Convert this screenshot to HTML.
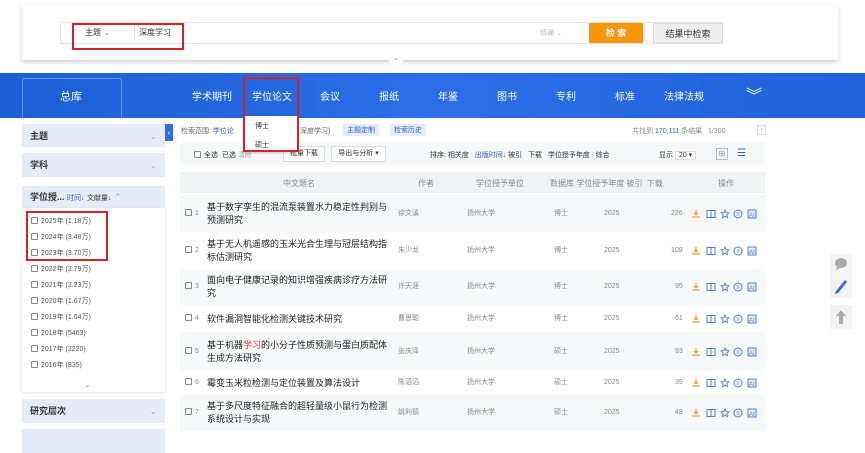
<!DOCTYPE html>
<html><head><meta charset="utf-8"><style>
*{margin:0;padding:0;box-sizing:border-box}
body{width:865px;height:439px;overflow:hidden;background:#fff;font-family:"Liberation Sans","Noto Sans CJK SC",sans-serif;position:relative;color:#333}
.a{position:absolute;white-space:nowrap}
.nav{color:#fff;font-size:10px}
.side{background:#e6ecf7;font-size:9px;font-weight:bold;color:#333;padding-left:8px;line-height:24px}
.yr{font-size:7px;color:#555}
.cb{display:inline-block;width:7px;height:7px;border:1px solid #888;border-radius:1px;vertical-align:-1px;margin-right:3px}
.row{position:absolute;left:180px;width:585px;font-size:9px}
.s{position:absolute;font-size:7px;color:#888;line-height:10px}
</style></head><body>
<!-- search panel -->
<div class="a" style="left:22px;top:5px;width:816px;height:55px;background:#fff;box-shadow:0 2px 4px rgba(0,0,0,.2)"></div>
<div class="a" style="left:60px;top:22px;width:663px;height:22px;border:1px solid #e5e5e5;background:#fff"></div>
<div class="a" style="left:72px;top:23px;width:112px;height:27px;border:2px solid #d2232a"></div>
<div class="a" style="left:85px;top:27px;font-size:8px">主题 <span style="color:#999">⌄</span></div>
<div class="a" style="left:134px;top:26px;width:1px;height:14px;background:#ddd"></div>
<div class="a" style="left:139px;top:27px;font-size:8px">深度学习</div>
<div class="a" style="left:540px;top:28px;font-size:7px;color:#bbb">精确 ⌄</div>
<div class="a" style="left:589px;top:23px;width:54px;height:20px;background:#f7950b;color:#fff;font-size:9px;font-weight:bold;text-align:center;line-height:20px">检 索</div>
<div class="a" style="left:653px;top:23px;width:70px;height:20px;background:#eee;font-size:9px;text-align:center;line-height:20px;border:1px solid #ddd">结果中检索</div>
<div class="a" style="left:389px;top:54px;width:14px;height:12px;background:#fff;border-radius:6px;font-size:7px;color:#999;text-align:center">⌄</div>
<!-- nav -->
<div class="a" style="left:0;top:73px;width:865px;height:45px;background:linear-gradient(90deg,#1b5fd6,#2a6fe8 50%,#1e62dc)"></div>
<div class="a" style="left:22px;top:78px;width:100px;height:40px;border:1px solid rgba(255,255,255,.35);border-bottom:none;border-radius:3px 3px 0 0"></div>
<div class="a nav" style="left:60px;top:88px;font-size:11px">总库</div>
<div class="a nav" style="left:192px;top:88px">学术期刊</div>
<div class="a nav" style="left:252px;top:88px">学位论文</div>
<div class="a nav" style="left:320px;top:88px">会议</div>
<div class="a nav" style="left:379px;top:88px">报纸</div>
<div class="a nav" style="left:438px;top:88px">年鉴</div>
<div class="a nav" style="left:497px;top:88px">图书</div>
<div class="a nav" style="left:556px;top:88px">专利</div>
<div class="a nav" style="left:615px;top:88px">标准</div>
<div class="a nav" style="left:664px;top:88px">法律法规</div>
<div class="a nav" style="left:746px;top:82px;font-size:16px">︾</div>
<!-- sidebar -->
<div class="a side" style="left:22px;top:124px;width:143px;height:23px">主题<span style="float:right;margin-right:8px;color:#aaa;font-weight:normal">⌄</span></div>
<div class="a side" style="left:22px;top:153px;width:143px;height:24px">学科<span style="float:right;margin-right:8px;color:#aaa;font-weight:normal">⌄</span></div>
<div class="a side" style="left:22px;top:186px;width:143px;height:22px;line-height:22px">学位授... <span style="color:#2a62d0;font-size:7px;font-weight:normal">时间↓</span> <span style="font-size:7px;font-weight:normal">文献量↓</span> <span style="color:#999;font-weight:normal">⌃</span></div>
<div class="a" style="left:22px;top:208px;width:143px;height:184px;background:#fff;box-shadow:0 1px 3px rgba(0,0,0,.12)"></div>
<div class="a yr" style="left:31px;top:214px;line-height:16px">
<div><span class="cb"></span>2025年 (1.18万)</div><div><span class="cb"></span>2024年 (3.48万)</div><div><span class="cb"></span>2023年 (3.70万)</div><div><span class="cb"></span>2022年 (2.79万)</div><div><span class="cb"></span>2021年 (2.23万)</div><div><span class="cb"></span>2020年 (1.67万)</div><div><span class="cb"></span>2019年 (1.04万)</div><div><span class="cb"></span>2018年 (5463)</div><div><span class="cb"></span>2017年 (2220)</div><div><span class="cb"></span>2016年 (835)</div></div>
<div class="a" style="left:26px;top:211px;width:82px;height:50px;border:2px solid #d2232a"></div>
<div class="a" style="left:84px;top:380px;font-size:8px;color:#7b9fe0">⌄</div>
<div class="a side" style="left:22px;top:399px;width:143px;height:24px">研究层次<span style="float:right;margin-right:8px;color:#aaa;font-weight:normal">⌄</span></div>
<div class="a side" style="left:22px;top:429px;width:143px;height:24px"></div>
<div class="a" style="left:165px;top:124px;width:8px;height:17px;background:#2a6fe8;color:#fff;font-size:8px;text-align:center;line-height:17px">‹</div>
<!-- top bar -->
<div class="a" style="left:181px;top:126px;font-size:7px;color:#666">检索范围: <span style="color:#2a62d0">学位论</span></div>
<div class="a" style="left:300px;top:126px;font-size:7px;color:#666">深度学习)</div>
<div class="a" style="left:343px;top:124px;padding:1px 4px;background:#e5edfb;font-size:7px;color:#2a62d0">主题定制</div>
<div class="a" style="left:390px;top:124px;padding:1px 4px;background:#e5edfb;font-size:7px;color:#2a62d0">检索历史</div>
<div class="a" style="left:632px;top:126px;font-size:7px;color:#888">共找到 <span style="color:#2a62d0">170,111</span> 条结果 &nbsp; 1/300</div>
<div class="a" style="left:757px;top:125px;width:9px;height:10px;border:1px solid #ddd;font-size:7px;color:#999;text-align:center;line-height:8px">›</div>
<!-- toolbar -->
<div class="a" style="left:180px;top:143px;width:585px;height:22px;background:#f6f7f9"></div>
<div class="a" style="left:194px;top:150px;font-size:7px"><span class="cb"></span>全选 &nbsp;已选 <span style="color:#aaa">清除</span></div>
<div class="a" style="left:283px;top:146px;width:42px;height:16px;background:#fff;border:1px solid #ddd;font-size:7px;text-align:center;line-height:14px">批量下载</div>
<div class="a" style="left:331px;top:146px;width:55px;height:16px;background:#fff;border:1px solid #ddd;font-size:7px;text-align:center;line-height:14px">导出与分析 ▾</div>
<div class="a" style="left:430px;top:150px;font-size:7px">排序: 相关度 &nbsp; <span style="color:#2a62d0">出版时间↓</span> 被引 &nbsp; 下载 &nbsp; 学位授予年度 &nbsp; 综合</div>
<div class="a" style="left:659px;top:150px;font-size:7px">显示 <span style="border:1px solid #ddd;background:#fff;padding:0 3px">20 ▾</span></div>
<div class="a" style="left:716px;top:148px;width:12px;height:12px;border:1px solid #bbb;font-size:8px;color:#999;line-height:10px;text-align:center">⊞</div>
<div class="a" style="left:737px;top:148px;font-size:10px;color:#2a62d0;line-height:12px">☰</div>
<!-- header -->
<div class="a" style="left:180px;top:172px;width:585px;height:21px;background:#f1f2f4"></div>
<div class="a" style="left:283px;top:178px;font-size:8px;color:#888">中文题名</div>
<div class="a" style="left:418px;top:178px;font-size:8px;color:#888">作者</div>
<div class="a" style="left:476px;top:178px;font-size:8px;color:#888">学位授予单位</div>
<div class="a" style="left:550px;top:178px;font-size:8px;color:#888">数据库 学位授予年度 被引 &nbsp;下载</div>
<div class="a" style="left:718px;top:178px;font-size:8px;color:#888">操作</div>
<div id="rows"></div>
<!-- dropdown (on top) -->
<div class="a" style="left:244px;top:116px;width:54px;height:36px;background:#fff;box-shadow:0 1px 3px rgba(0,0,0,.2);z-index:5"></div>
<div class="a" style="left:255px;top:121px;font-size:7px;z-index:6">博士</div>
<div class="a" style="left:255px;top:140px;font-size:7px;z-index:6">硕士</div>
<div class="a" style="left:243px;top:77px;width:56px;height:75px;border:2px solid #d2232a;z-index:7"></div>
<script>
var R=[[195,37,"基于数字孪生的混流泵装置水力稳定性判别与预测研究","徐文溪","博士","226"],
[233,35,"基于无人机遥感的玉米光合生理与冠层结构指标估测研究","朱少龙","博士","109"],
[269,36,"面向电子健康记录的知识增强疾病诊疗方法研究","许天涯","博士","95"],
[306,25,"软件漏洞智能化检测关键技术研究","曹思聪","博士","61"],
[332,39,"基于机器<span style='color:#e33'>学习</span>的小分子性质预测与蛋白质配体生成方法研究","张庆泽","硕士","93"],
[372,22,"霉变玉米粒检测与定位装置及算法设计","陈滔滔","硕士","39"],
[395,36,"基于多尺度特征融合的超轻量级小鼠行为检测系统设计与实现","姚利德","硕士","48"]];
var ic='<svg width="70" height="10" viewBox="0 0 70 10"><path d="M4 1v5M2 4l2 2 2-2M0 8h8" stroke="#f2a33a" stroke-width="1.3" fill="none"/><rect x="15" y="1.5" width="8" height="7" stroke="#4a7fd8" fill="none"/><path d="M19 1.5v7" stroke="#4a7fd8"/><path d="M33 1l1.2 2.6 2.8.3-2.1 1.9.6 2.8-2.5-1.4-2.5 1.4.6-2.8-2.1-1.9 2.8-.3z" stroke="#4a7fd8" fill="none" stroke-width=".9"/><circle cx="46" cy="5" r="4" stroke="#4a7fd8" fill="none"/><path d="M44.5 4h3M44.5 6h3" stroke="#4a7fd8" stroke-width=".8"/><rect x="56" y="1" width="8" height="8" stroke="#4a7fd8" fill="#e8efff"/><text x="57" y="8" font-size="6" fill="#4a7fd8" font-family="Liberation Sans">AI</text></svg>';
var h="";R.forEach(function(r,i){var y=r[0],H=r[1],c=y+H/2;
h+='<div class="row" style="top:'+y+'px;height:'+H+'px;background:'+(i%2?'#fff':'#f7f8fa')+'"></div>';
h+='<div class="a" style="left:185px;top:'+(c-5)+'px;font-size:7px;color:#888;line-height:10px"><span class="cb"></span>'+(i+1)+'</div>';
var ty=H>30?c-13:c-6;
h+='<div class="a" style="left:207px;top:'+ty+'px;width:185px;white-space:normal;font-size:9px;line-height:13px;color:#222">'+r[2]+'</div>';
h+='<div class="s" style="left:398px;top:'+(c-5)+'px">'+r[3]+'</div>';
h+='<div class="s" style="left:467px;top:'+(c-5)+'px">扬州大学</div>';
h+='<div class="s" style="left:554px;top:'+(c-5)+'px">'+r[4]+'</div>';
h+='<div class="s" style="left:604px;top:'+(c-5)+'px">2025</div>';
h+='<div class="s" style="left:'+(683-r[5].length*4)+'px;top:'+(c-5)+'px">'+r[5]+'</div>';
h+='<div class="a" style="left:692px;top:'+(c-5)+'px;line-height:10px">'+ic+'</div>';
});document.getElementById("rows").innerHTML=h;
</script>
<!-- float tools -->
<div class="a" style="left:830px;top:254px;width:22px;height:44px;background:#f3f3f3"></div>
<svg class="a" style="left:833px;top:257px" width="16" height="38" viewBox="0 0 16 38"><ellipse cx="8" cy="6" rx="6" ry="5" fill="#aaa"/><path d="M4 10l-1 3 4-2z" fill="#aaa"/><path d="M3 34l9-11 2 2-9 11-3 1z" fill="#2a6fe8"/></svg>
<div class="a" style="left:830px;top:305px;width:22px;height:24px;background:#f3f3f3"></div>
<svg class="a" style="left:835px;top:309px" width="12" height="16" viewBox="0 0 12 16"><path d="M6 1l5 6H8v8H4V7H1z" fill="#aaa"/></svg>
</body></html>
